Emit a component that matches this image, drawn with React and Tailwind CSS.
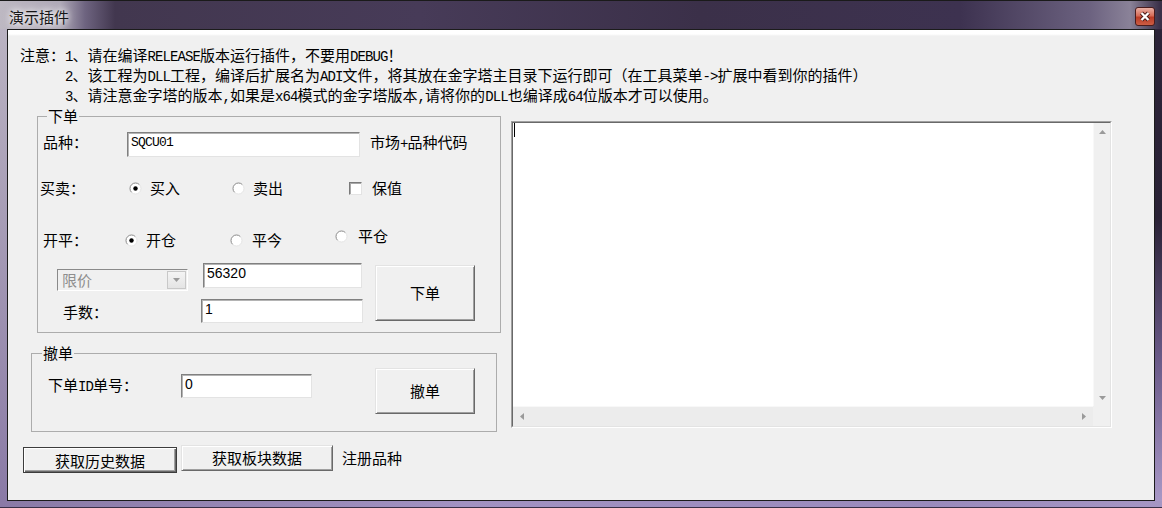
// 演示插件 — classic Win32 dialog recreation
import React from 'react';

// SimSun-style half-width Latin run (7.5px per char)
const L = ({ children }) => (
  <span className="font-['Liberation_Mono',monospace] text-[14px] tracking-[-0.9px] leading-none">{children}</span>
);

function Radio({ checked }) {
  return (
    <svg width="13" height="13" viewBox="0 0 13 13" className="shrink-0">
      <circle cx="6.5" cy="6.5" r="5.5" fill="#fff" />
      <path d="M2.6 10.4 A5.5 5.5 0 0 1 10.4 2.6" fill="none" stroke="#8a8a8a" />
      <path d="M10.4 2.6 A5.5 5.5 0 0 1 2.6 10.4" fill="none" stroke="#e4e4e4" />
      {checked && <circle cx="6.5" cy="6.5" r="2.2" fill="#000" />}
    </svg>
  );
}

function Edit({ children, className, mono }) {
  return (
    <div
      className={`shrink-0 bg-white border border-t-[#808080] border-l-[#808080] border-r-[#e3e3e3] border-b-[#e3e3e3] shadow-[inset_1px_1px_0_#b4b4b4] pl-[3px] ${
        mono
          ? "pt-[3px] font-['Liberation_Mono',monospace] text-[13px] tracking-[-0.8px] leading-[14px]"
          : "pt-[1px] font-['Liberation_Sans',sans-serif] text-[14px] leading-[16px]"
      } ${className}`}
    >
      {children}
    </div>
  );
}

function Button({ children, className, isDefault }) {
  return (
    <div
      className={`shrink-0 flex items-center justify-center bg-[#f0f0f0] leading-[20px] ${
        isDefault
          ? 'border border-[#3c3c3c] shadow-[inset_1px_1px_0_#fff,inset_-1px_-1px_0_#696969,inset_-2px_-2px_0_#a0a0a0]'
          : 'border border-t-[#e3e3e3] border-l-[#e3e3e3] border-r-[#696969] border-b-[#696969] shadow-[inset_1px_1px_0_#fff,inset_-1px_-1px_0_#a0a0a0]'
      } ${className}`}
    >
      {children}
    </div>
  );
}

function Arrow({ dir }) {
  const d = {
    up: 'M0 4 L3.5 0 L7 4Z',
    down: 'M0 0 L7 0 L3.5 4Z',
    left: 'M4 0 L4 7 L0 3.5Z',
    right: 'M0 0 L4 3.5 L0 7Z',
  }[dir];
  const vertical = dir === 'up' || dir === 'down';
  return (
    <svg width={vertical ? 7 : 4} height={vertical ? 4 : 7} viewBox={vertical ? '0 0 7 4' : '0 0 4 7'}>
      <path d={d} fill="#9a9a9a" />
    </svg>
  );
}

export default function App() {
  return (
    <div className="w-[1162px] h-[508px] flex flex-col overflow-hidden bg-[#3a3048] text-[15px] text-black font-['Noto_Sans_CJK_SC',sans-serif]">
      {/* Title bar */}
      <div className="h-[29px] shrink-0 flex items-start border-t border-[#1a1a1a] pl-[9px] pr-[7px] bg-[linear-gradient(90deg,#bdb8c2_0px,#b0aab8_60px,#6e6480_85px,#42374f_115px,#473b58_420px,#3b3049_700px,#3d3250_960px,#6c6280_1090px,#8a8298_1130px,#3a3048_1160px)]">
        <span className="mt-[6px] leading-[20px] text-[#161616] [text-shadow:0_0_6px_#fff,0_0_10px_#fff]">
          演示插件
        </span>
        <div className="ml-auto mt-[6px] w-[20px] h-[19px] flex items-center justify-center rounded-[3px] border border-[#4a1c1c] bg-[linear-gradient(#eab0a4,#d66c58_45%,#bb3c26_55%,#cc5e44)]">
          <svg width="12" height="11" viewBox="0 0 12 11">
            <path d="M2.5 2 L9.5 9 M9.5 2 L2.5 9" stroke="#4a1a16" strokeWidth="4.2" />
            <path d="M2.5 2 L9.5 9 M9.5 2 L2.5 9" stroke="#fff" strokeWidth="2.3" />
          </svg>
        </div>
      </div>

      <div className="flex flex-1 min-h-0">
        <div className="w-[7px] shrink-0 bg-[linear-gradient(180deg,#bab3c2,#a79db6_40%,#8a7aa6)]" />

        {/* Client area */}
        <div className="flex-1 border border-[#1c1c1c] bg-[linear-gradient(#fff_0px,#fff_4px,#f0f0f0_6px)]">
          {/* Notes */}
          <div className="pt-[15px] pl-[12px] leading-[20px] whitespace-nowrap">
            <div className="h-[20px]">注意：<L>1</L>、请在编译<L>RELEASE</L>版本运行插件，不要用<L>DEBUG</L>！</div>
            <div className="h-[20px] pl-[45px]"><L>2</L>、该工程为<L>DLL</L>工程，编译后扩展名为<L>ADI</L>文件，将其放在金字塔主目录下运行即可（在工具菜单<L>-&gt;</L>扩展中看到你的插件）</div>
            <div className="h-[20px] pl-[45px]"><L>3</L>、请注意金字塔的版本<L>,</L>如果是<L>x64</L>模式的金字塔版本<L>,</L>请将你的<L>DLL</L>也编译成<L>64</L>位版本才可以使用。</div>
          </div>

          <div className="flex">
            {/* Left column */}
            <div className="w-[503px] shrink-0 leading-[20px]">
              {/* 下单 group */}
              <div className="relative mt-[11px] ml-[29px] w-[464px] h-[217px] border border-[#acacac]">
                <span className="absolute left-[9px] -top-[11px] px-[1px] bg-[#f0f0f0]">下单</span>

                <div className="mt-[15px] flex items-start">
                  <span className="ml-[5px] w-[84px]">品种：</span>
                  <Edit mono className="w-[233px] h-[25px]">SQCU01</Edit>
                  <span className="ml-[10px] h-[20px]">市场<L>+</L>品种代码</span>
                </div>

                <div className="mt-[21px] h-[20px] flex items-center">
                  <span className="ml-[2px] w-[89px]">买卖：</span>
                  <Radio checked />
                  <span className="ml-[8px]">买入</span>
                  <span className="ml-[52px]"><Radio /></span>
                  <span className="ml-[8px]">卖出</span>
                  <span className="ml-[66px] w-[13px] h-[13px] bg-white border border-t-[#7a7a7a] border-l-[#7a7a7a] border-r-[#e3e3e3] border-b-[#e3e3e3] shadow-[inset_1px_1px_0_#a8a8a8]" />
                  <span className="ml-[10px]">保值</span>
                </div>

                <div className="mt-[32px] h-[20px] flex items-center">
                  <span className="ml-[5px] w-[82px]">开平：</span>
                  <Radio checked />
                  <span className="ml-[8px]">开仓</span>
                  <span className="ml-[54px]"><Radio /></span>
                  <span className="ml-[9px]">平今</span>
                  <span className="ml-[53px] mb-[8px] flex items-center">
                    <Radio />
                    <span className="ml-[10px]">平仓</span>
                  </span>
                </div>

                <div className="mt-[13px] flex items-start">
                  <div className="ml-[19px] w-[131px] pt-[6px]">
                    <div className="h-[22px] flex border border-t-[#8a8a8a] border-l-[#8a8a8a] border-r-white border-b-white bg-[#f0f0f0]">
                      <span className="flex-1 pl-[4px] leading-[20px] text-[#8e8e8e]">限价</span>
                      <div className="w-[19px] mt-[1px] mb-[1px] mr-[1px] flex items-center justify-center border border-[#c8c8c8] bg-[linear-gradient(#f4f4f4,#e4e4e4)]">
                        <Arrow dir="down" />
                      </div>
                    </div>
                    <div className="mt-[11px] ml-[6px]">手数：</div>
                  </div>
                  <div className="ml-[15px] w-[159px] flex flex-col">
                    <Edit className="w-[159px] h-[25px]">56320</Edit>
                    <Edit className="mt-[11px] -ml-[2px] w-[162px] h-[24px]">1</Edit>
                  </div>
                  <Button className="ml-[13px] mt-[2px] w-[100px] h-[56px]">下单</Button>
                </div>
              </div>

              {/* 撤单 group */}
              <div className="relative mt-[20px] ml-[23px] w-[466px] h-[79px] border border-[#acacac]">
                <span className="absolute left-[10px] -top-[11px] px-[1px] bg-[#f0f0f0]">撤单</span>
                <div className="mt-[14px] flex items-start">
                  <span className="ml-[16px] mt-[7px] w-[133px] h-[20px]">下单<L>ID</L>单号：</span>
                  <Edit className="mt-[6px] w-[131px] h-[24px]">0</Edit>
                  <Button className="ml-[63px] w-[100px] h-[46px]">撤单</Button>
                </div>
              </div>

              {/* Bottom buttons */}
              <div className="mt-[13px] flex items-start">
                <Button isDefault className="ml-[15px] mt-[2px] w-[154px] h-[26px] pt-[2px]">获取历史数据</Button>
                <Button className="ml-[4px] w-[152px] h-[26px]">获取板块数据</Button>
                <span className="ml-[9px] mt-[3px]">注册品种</span>
              </div>
            </div>

            {/* Output text box */}
            <div className="mt-[16px] w-[601px] h-[307px] border border-t-[#a0a0a0] border-l-[#a0a0a0] border-r-white border-b-white">
              <div className="h-full flex flex-col border border-t-[#696969] border-l-[#696969] border-r-[#e3e3e3] border-b-[#e3e3e3]">
                <div className="flex flex-1 min-h-0">
                  <div className="flex-1 bg-white">
                    <div className="ml-[1px] w-[1px] h-[14px] bg-black" />
                  </div>
                  <div className="w-[17px] flex flex-col justify-between bg-[#f0f0f0] border-l border-[#f8f8f8]">
                    <div className="h-[17px] flex items-center justify-center"><Arrow dir="up" /></div>
                    <div className="h-[17px] flex items-center justify-center"><Arrow dir="down" /></div>
                  </div>
                </div>
                <div className="h-[20px] flex">
                  <div className="flex-1 flex items-center justify-between px-[7px] bg-[#ececec] border-t border-[#f8f8f8]">
                    <Arrow dir="left" />
                    <Arrow dir="right" />
                  </div>
                  <div className="w-[17px] bg-[#f0f0f0]" />
                </div>
              </div>
            </div>
          </div>
        </div>

        <div className="w-[7px] shrink-0 bg-[linear-gradient(180deg,#2c2438,#2a2236_40%,#6a5a88_70%,#a898c6)]" />
      </div>

      <div className="h-[7px] shrink-0 bg-[linear-gradient(90deg,#8a7aa6,#a292c2_40%,#9a8abc_80%,#a696c4)] border-b border-[#3a3048]" />
    </div>
  );
}
